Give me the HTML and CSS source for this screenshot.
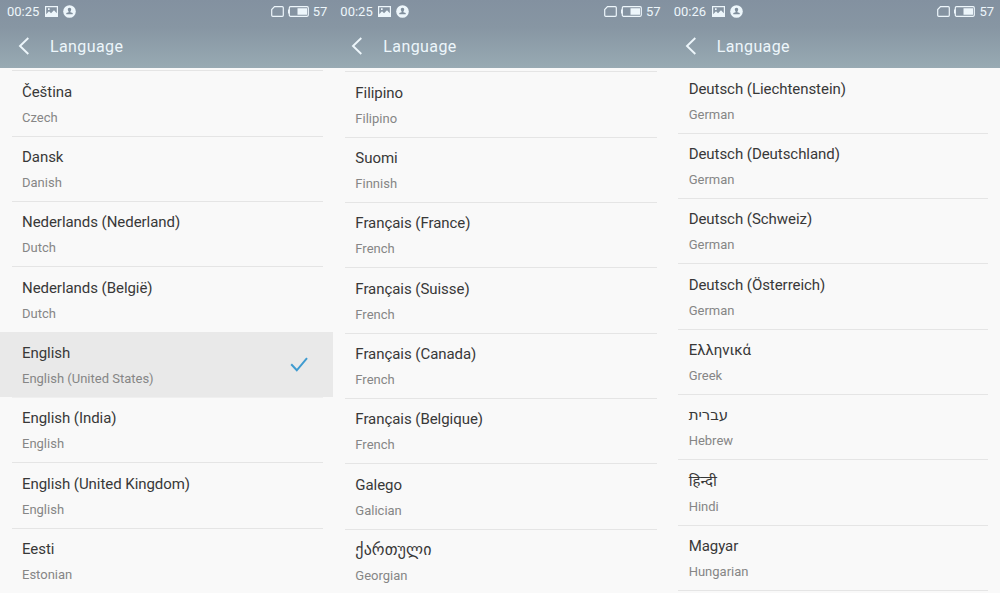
FILE: index.html
```html
<!DOCTYPE html>
<html lang="en">
<head>
<meta charset="utf-8">
<title>Language</title>
<link rel="stylesheet" href="styles.css">
</head>
<body>
<svg class="sprite" aria-hidden="true">
  <symbol id="picture" viewBox="0 0 13 11">
    <path fill="currentColor" fill-rule="evenodd" d="M0 0h13v11H0zM1.2 1.3v7L4 5.3l2 2 3-3 2.8 3v-6zM3 2.3h1.6v1.6H3z"/>
  </symbol>
  <symbol id="person" viewBox="0 0 13 13">
    <circle cx="6.5" cy="6.5" r="6.3" fill="currentColor"/>
    <path fill="#7f8e9c" d="M6.500 2.800c1.100 0 1.700.8 1.700 1.800 0 .9-.4 1.400-.8 1.800v.8l2.300.9v1.200H3.300V8.100l2.300-.9v-.8c-.4-.4-.8-.9-.8-1.800 0-1 .6-1.800 1.700-1.800z"/>
  </symbol>
  <symbol id="sim" viewBox="0 0 13 11">
    <path fill="none" stroke="currentColor" stroke-width="1.2" d="M3.500.7h7.800a1 1 0 0 1 1 1v7.600a1 1 0 0 1-1 1H1.700a1 1 0 0 1-1-1V3.500z"/>
  </symbol>
  <symbol id="battery" viewBox="0 0 21 11">
    <rect x="1.300" y=".7" width="19" height="9.600" rx="1.200" fill="none" stroke="currentColor" stroke-width="1.200"/>
    <path fill="currentColor" d="M0 3.500h1.500v4H0zM9.500 2.300h9.500v6.400H9.500z"/>
  </symbol>
  <symbol id="back" viewBox="0 0 12 18">
    <path fill="none" stroke="currentColor" stroke-width="1.900" d="M10.300 1 2 9l8.300 8"/>
  </symbol>
  <symbol id="check" viewBox="0 0 18 16">
    <path fill="none" stroke="currentColor" stroke-width="2" d="M1.200 7.300 6.800 13.300 17 1.200"/>
  </symbol>
</svg>
<main class="screens">
  <section class="phone">
    <header class="header">
      <div class="status"><span class="clock">00:25</span><svg class="i-picture"><use href="#picture"/></svg><svg class="i-person"><use href="#person"/></svg><svg class="i-sim"><use href="#sim"/></svg><svg class="i-battery"><use href="#battery"/></svg><span class="level">57</span></div>
      <div class="bar"><svg class="i-back"><use href="#back"/></svg><h1 class="heading">Language</h1></div>
    </header>
    <ul class="list list-a">
      <li class="row"><span class="name">Čeština</span><span class="sub">Czech</span></li>
      <li class="row"><span class="name">Dansk</span><span class="sub">Danish</span></li>
      <li class="row"><span class="name">Nederlands (Nederland)</span><span class="sub">Dutch</span></li>
      <li class="row"><span class="name">Nederlands (België)</span><span class="sub">Dutch</span></li>
      <li class="row selected"><div><span class="name">English</span><span class="sub">English (United States)</span></div><svg class="i-check"><use href="#check"/></svg></li>
      <li class="row"><span class="name">English (India)</span><span class="sub">English</span></li>
      <li class="row"><span class="name">English (United Kingdom)</span><span class="sub">English</span></li>
      <li class="row"><span class="name">Eesti</span><span class="sub">Estonian</span></li>
    </ul>
  </section>
  <section class="phone">
    <header class="header">
      <div class="status"><span class="clock">00:25</span><svg class="i-picture"><use href="#picture"/></svg><svg class="i-person"><use href="#person"/></svg><svg class="i-sim"><use href="#sim"/></svg><svg class="i-battery"><use href="#battery"/></svg><span class="level">57</span></div>
      <div class="bar"><svg class="i-back"><use href="#back"/></svg><h1 class="heading">Language</h1></div>
    </header>
    <ul class="list list-b">
      <li class="row"><span class="name">Filipino</span><span class="sub">Filipino</span></li>
      <li class="row"><span class="name">Suomi</span><span class="sub">Finnish</span></li>
      <li class="row"><span class="name">Français (France)</span><span class="sub">French</span></li>
      <li class="row"><span class="name">Français (Suisse)</span><span class="sub">French</span></li>
      <li class="row"><span class="name">Français (Canada)</span><span class="sub">French</span></li>
      <li class="row"><span class="name">Français (Belgique)</span><span class="sub">French</span></li>
      <li class="row"><span class="name">Galego</span><span class="sub">Galician</span></li>
      <li class="row"><span class="name georgian">ქართული</span><span class="sub">Georgian</span></li>
    </ul>
  </section>
  <section class="phone">
    <header class="header">
      <div class="status"><span class="clock">00:26</span><svg class="i-picture"><use href="#picture"/></svg><svg class="i-person"><use href="#person"/></svg><svg class="i-sim"><use href="#sim"/></svg><svg class="i-battery"><use href="#battery"/></svg><span class="level">57</span></div>
      <div class="bar"><svg class="i-back"><use href="#back"/></svg><h1 class="heading">Language</h1></div>
    </header>
    <ul class="list list-c">
      <li class="row"><span class="name">Deutsch (Liechtenstein)</span><span class="sub">German</span></li>
      <li class="row"><span class="name">Deutsch (Deutschland)</span><span class="sub">German</span></li>
      <li class="row"><span class="name">Deutsch (Schweiz)</span><span class="sub">German</span></li>
      <li class="row"><span class="name">Deutsch (Österreich)</span><span class="sub">German</span></li>
      <li class="row"><span class="name">Ελληνικά</span><span class="sub">Greek</span></li>
      <li class="row"><span class="name">עברית</span><span class="sub">Hebrew</span></li>
      <li class="row"><span class="name">हिन्दी</span><span class="sub">Hindi</span></li>
      <li class="row"><span class="name">Magyar</span><span class="sub">Hungarian</span></li>
      <li class="row"></li>
    </ul>
  </section>
</main>
</body>
</html>
```
FILE: styles.css
```css
* { box-sizing: border-box; }
body {
  margin: 0;
  background: #f9f9f9;
  font-family: Roboto, "Noto Sans", "DejaVu Sans", sans-serif;
}
.sprite { display: none; }
.screens {
  display: grid;
  grid-template-columns: repeat(3, 1fr);
  height: 593px;
  overflow: hidden;
}
.phone { min-width: 0; height: 593px; overflow: hidden; }
.header {
  height: 67.5px;
  color: #edf6fb;
  background: linear-gradient(#8391a0, #8796a3 40%, #98aab3);
}
.status {
  display: flex;
  align-items: center;
  height: 23px;
  padding: 0 6px 0 7px;
  font-size: 13px;
  line-height: 23px;
}
.clock { width: 38px; }
.i-picture { width: 13px; height: 11px; }
.i-person { width: 13px; height: 13px; margin-left: 5px; }
.i-sim { width: 13px; height: 11px; margin-left: auto; }
.i-battery { width: 21px; height: 11px; margin: 0 4px; }
.bar { display: flex; align-items: center; height: 45px; padding-left: 18px; }
.i-back { width: 12px; height: 18px; }
.heading {
  margin: 2px 0 0 20px;
  font-size: 16px;
  font-weight: 400;
  line-height: 20px;
  letter-spacing: 0.4px;
}
.list { margin: 0; padding: 0; list-style: none; }
.list-a { padding-top: 2.8px; }
.list-b { padding-top: 3.8px; }
.list-c .row { margin: 0 12px 0 11px; padding-left: 11px; }
.list-c .row:first-child { border-top-color: transparent; }
.row {
  height: 65.33px;
  margin: 0 10px 0 12px;
  padding: 10.3px 0 0 10px;
  border-top: 1px solid #e5e5e5;
}
.name, .sub { display: block; white-space: nowrap; }
.name { height: 20px; color: #383838; font-size: 15px; line-height: 20px; letter-spacing: -0.05px; }
.sub { height: 18px; margin-top: 7px; color: #868686; font-size: 13px; line-height: 18px; }
.georgian { font-size: 16px; letter-spacing: 0.1px; }
.selected {
  display: flex;
  justify-content: space-between;
  margin: 0;
  padding: 10.3px 25px 0 22px;
  border-top-color: #e9e9e9;
  background: #e9e9e9;
}
.selected + .row { border-top-color: #efefef; }
.i-check { width: 18px; height: 16px; margin-top: 14px; color: #3f9bd0; }
```
